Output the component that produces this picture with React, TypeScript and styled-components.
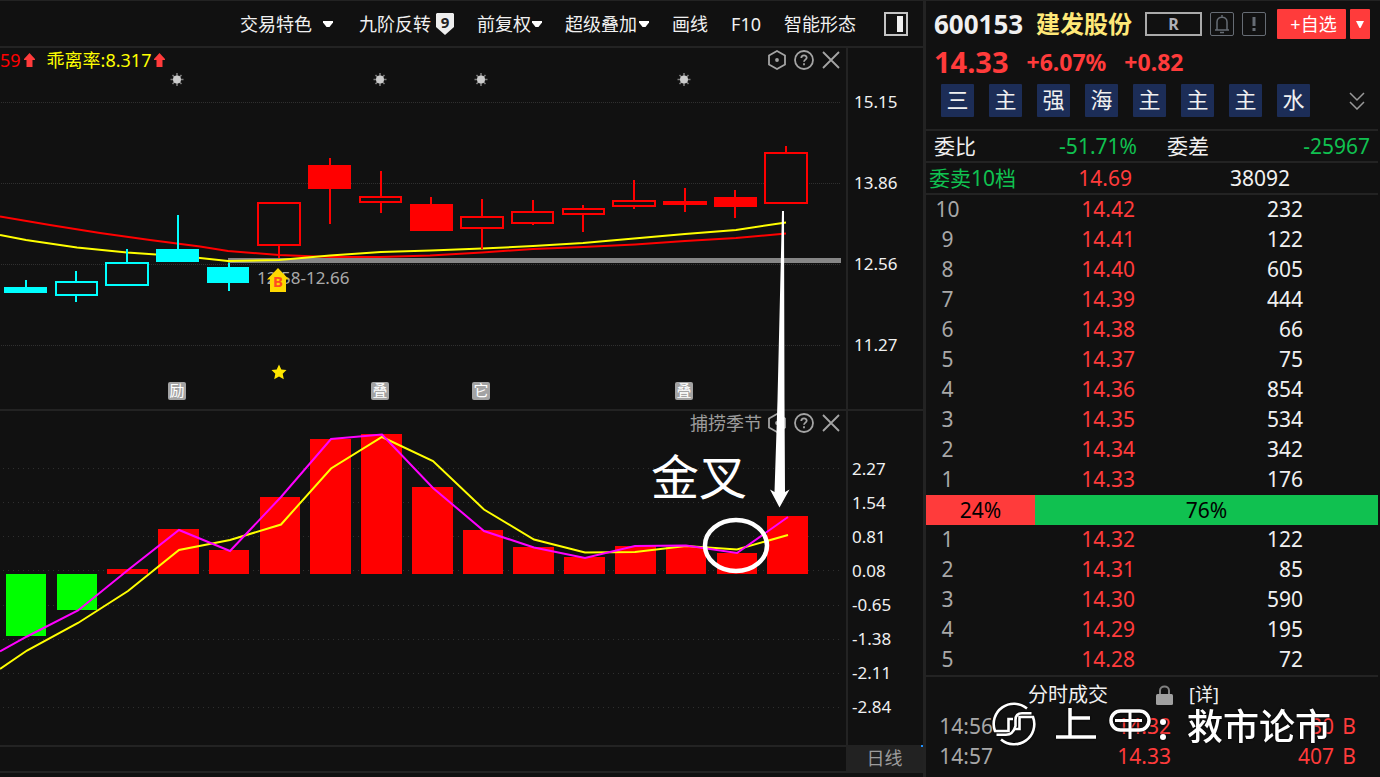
import React from "react";
import styled, { createGlobalStyle } from "styled-components";

const c = {
  bg: "#111111",
  line: "#232323",
  text: "#f0f0f0",
  muted: "#9c9c9c",
  red: "#ff3b3b",
  green: "#10c150",
  pureRed: "#ff0000",
  cyan: "#00ffff",
  yellow: "#ffff00",
  magenta: "#ff00ff",
};

const GlobalStyle = createGlobalStyle`
  * { box-sizing: border-box; }
  body {
    margin: 0;
    background: ${c.bg};
    color: ${c.text};
    font-family: "Noto Sans", "Noto Sans CJK SC", sans-serif;
    font-size: 18px;
  }
  button {
    font: inherit;
    color: inherit;
    background: none;
    border: 0;
    padding: 0;
    cursor: pointer;
  }
`;

/* ---------- page frame ---------- */

const Page = styled.div`
  display: flex;
  min-height: 100vh;
  border-top: 1px solid ${c.line};
  overflow: hidden;
`;

const Workspace = styled.main`
  flex: 1;
  min-width: 0;
  display: flex;
  flex-direction: column;
`;

const Sidebar = styled.aside`
  position: relative;
  flex: 0 0 457px;
  border-left: 3px solid ${c.line};
  padding-right: 2px;
`;

/* ---------- toolbar ---------- */

const Toolbar = styled.nav`
  display: flex;
  align-items: center;
  justify-content: flex-end;
  gap: 23px;
  height: 47px;
  padding-right: 15px;
  border-bottom: 2px solid ${c.line};
`;

const ToolButton = styled.button<{ $gap?: number; $after?: number }>`
  display: flex;
  align-items: center;
  gap: ${(p) => p.$gap ?? 2}px;
  margin-right: ${(p) => p.$after ?? 0}px;
  line-height: 26px;
  white-space: nowrap;
`;

const Caret = () => (
  <svg width="10" height="6" viewBox="0 0 10 6" aria-hidden="true">
    <path d="M0 0H10V1.5L6.5 6H3.5L0 1.5Z" fill="#fff" />
  </svg>
);

const ShieldSvg = styled.svg`
  overflow: visible;
`;

const Shield = () => (
  <ShieldSvg width="18" height="22" viewBox="0 0 18 22" aria-hidden="true">
    <path d="M1 0H17L18 1V14L9 22L0 14V1Z" fill="#eeeeee" />
    <text x="9" y="15" textAnchor="middle" fontSize="15" fontWeight="700" fill="#222">
      9
    </text>
  </ShieldSvg>
);

const PanelIcon = () => (
  <svg width="24" height="24" viewBox="0 0 24 24" aria-hidden="true">
    <rect x="1" y="1" width="22" height="22" fill="none" stroke="#c4c4c4" strokeWidth="2" />
    <rect x="13" y="4" width="6" height="16" fill="#f0f0f0" />
  </svg>
);

/* ---------- chart panes ---------- */

const ChartStack = styled.div`
  position: relative;
`;

const Pane = styled.section`
  display: flex;
  border-bottom: 2px solid ${c.line};
`;

const Plot = styled.div`
  position: relative;
  flex: 1;
  min-width: 0;
`;

const PlotSvg = styled.svg`
  display: block;
  width: 100%;
`;

const Axis = styled.div<{ $top: number; $step: number; $indent: number }>`
  flex: 0 0 77px;
  border-left: 2px solid ${c.line};
  padding: ${(p) => p.$top}px 0 0 ${(p) => p.$indent}px;
  font-size: 17px;
  line-height: ${(p) => p.$step}px;
`;

const PaneHead = styled.header`
  position: absolute;
  top: 0;
  left: 0;
  right: 0;
  display: flex;
  align-items: center;
  height: 24px;
  padding-right: 5px;
  line-height: 24px;
`;

const Legend = styled.span<{ $color: string }>`
  display: flex;
  align-items: center;
  gap: 3px;
  margin-right: 12px;
  color: ${(p) => p.$color};
`;

const PaneTools = styled.div`
  display: flex;
  align-items: center;
  gap: 7px;
  margin-left: auto;
  color: ${c.muted};
`;

const PaneTitle = styled.span`
  margin-right: -2px;
`;

const IconButton = styled.button`
  display: flex;
  color: #a4a4a4;
`;

const UpArrow = () => (
  <svg width="11" height="14" viewBox="0 0 11 14" aria-hidden="true">
    <path d="M5.500 0L11 6V7H8.500V14H2.500V7H0V6Z" fill={c.red} />
  </svg>
);

const Tools = ({ title }: { title?: string }) => (
  <PaneTools>
    {title && <PaneTitle>{title}</PaneTitle>}
    <IconButton aria-label="设置">
      <svg width="20" height="20" viewBox="0 0 20 20" fill="none" stroke="currentColor" strokeWidth="1.800">
        <path d="M10 1L18 5.500V14.500L10 19L2 14.500V5.500Z" />
        <circle cx="10" cy="10" r="1.900" fill="currentColor" stroke="none" />
      </svg>
    </IconButton>
    <IconButton aria-label="帮助">
      <svg width="20" height="20" viewBox="0 0 20 20" fill="none" stroke="currentColor" strokeWidth="1.800">
        <circle cx="10" cy="10" r="9" />
        <path d="M7.300 8C7.300 4.500 12.800 4.500 12.700 7.800C12.600 9.600 10 9.700 10 11.800" />
        <path d="M10 13.300V15.200" />
      </svg>
    </IconButton>
    <IconButton aria-label="关闭">
      <svg width="20" height="20" viewBox="0 0 20 20" fill="none" stroke="currentColor" strokeWidth="1.800">
        <path d="M2 2L18 18M18 2L2 18" />
      </svg>
    </IconButton>
  </PaneTools>
);

type Candle = {
  x: number;
  w: number;
  top: number;
  bottom: number;
  mid: number;
  high: number;
  low: number;
  color: string;
  solid?: boolean;
};

const candles: Candle[] = [
  { x: 4, w: 43, top: 287, bottom: 293, mid: 26, high: 280, low: 293, color: c.cyan, solid: true },
  { x: 55, w: 43, top: 281, bottom: 296, mid: 76, high: 271, low: 302, color: c.cyan },
  { x: 105, w: 44, top: 262, bottom: 286, mid: 127, high: 249, low: 286, color: c.cyan },
  { x: 156, w: 43, top: 249, bottom: 262, mid: 178, high: 215, low: 262, color: c.cyan, solid: true },
  { x: 207, w: 42, top: 267, bottom: 283, mid: 229, high: 263, low: 291, color: c.cyan, solid: true },
  { x: 257, w: 44, top: 202, bottom: 246, mid: 279, high: 202, low: 258, color: c.pureRed },
  { x: 308, w: 43, top: 165, bottom: 189, mid: 330, high: 158, low: 224, color: c.pureRed, solid: true },
  { x: 359, w: 43, top: 196, bottom: 203, mid: 381, high: 171, low: 213, color: c.pureRed },
  { x: 410, w: 43, top: 204, bottom: 231, mid: 431, high: 197, low: 231, color: c.pureRed, solid: true },
  { x: 460, w: 44, top: 216, bottom: 229, mid: 482, high: 199, low: 249, color: c.pureRed },
  { x: 511, w: 43, top: 211, bottom: 224, mid: 533, high: 200, low: 225, color: c.pureRed },
  { x: 562, w: 43, top: 208, bottom: 215, mid: 583, high: 205, low: 232, color: c.pureRed },
  { x: 612, w: 44, top: 200, bottom: 207, mid: 634, high: 180, low: 209, color: c.pureRed },
  { x: 663, w: 44, top: 201, bottom: 205, mid: 685, high: 188, low: 212, color: c.pureRed, solid: true },
  { x: 714, w: 43, top: 197, bottom: 207, mid: 735, high: 190, low: 218, color: c.pureRed, solid: true },
  { x: 764, w: 44, top: 152, bottom: 204, mid: 786, high: 146, low: 204, color: c.pureRed },
];

const maRed =
  "0,216.500 50,225 100,233 150,240 200,246.500 228,251 279,255 330,257 380,257 430,255.500 482,252.500 533,249 583,247 635,244.500 685,241 736,238 786,233.500";
const maYellow =
  "0,235 26,240 77,247.500 127,252.500 178,256 200,258 228,261 279,260 330,255.500 381,252 431,250.500 482,248.500 533,246 583,243 634,238.500 685,234 736,230 786,222.500";

const events = [
  { x: 177, label: "励" },
  { x: 380, label: "叠" },
  { x: 481, label: "它" },
  { x: 684, label: "叠" },
];

const priceTicks = ["15.15", "13.86", "12.56", "11.27"];

const PriceChart = () => (
  <PlotSvg height="361" viewBox="0 48 846 361" preserveAspectRatio="xMaxYMin meet">
    {[102, 183, 264, 345].map((y) => (
      <line key={y} x1="1" x2="841" y1={y + 0.5} y2={y + 0.5} stroke="#303030" strokeDasharray="1 1" />
    ))}
    <rect x="228" y="258" width="613" height="5" fill="#868686" />
    <polyline points={maRed} fill="none" stroke={c.pureRed} strokeWidth="2" />
    <polyline points={maYellow} fill="none" stroke={c.yellow} strokeWidth="2" />
    {candles.map((k) => (
      <g key={k.x} stroke={k.color} strokeWidth="2">
        <line x1={k.mid} x2={k.mid} y1={k.high} y2={k.low} />
        <rect
          x={k.x + 1}
          y={k.top + 1}
          width={k.w - 2}
          height={k.bottom - k.top - 2}
          fill={k.solid ? k.color : c.bg}
        />
      </g>
    ))}
    {events.map((e) => (
      <g key={e.x}>
        <g stroke="#7c7c7c" strokeWidth="1.600">
          <path d={`M${e.x} 73V86M${e.x - 6.5} 79.500H${e.x + 6.5}M${e.x - 4.5} 75L${e.x + 4.5} 84M${e.x + 4.5} 75L${e.x - 4.5} 84`} />
          <circle cx={e.x} cy="79.500" r="4" fill="#cccccc" stroke="none" />
        </g>
        <rect x={e.x - 9} y="382" width="18" height="18" rx="2" fill="#a3a3a3" />
        <text x={e.x} y="396" textAnchor="middle" fontSize="15" fill="#fff">
          {e.label}
        </text>
      </g>
    ))}
    <text x="257" y="284" fontSize="17" fill="#aaaaaa">
      12.58-12.66
    </text>
    <path d="M278 268L289 279.500H286V292H270V279.500H267Z" fill="#ffd800" />
    <text x="278" y="287" textAnchor="middle" fontSize="15" fontWeight="700" fill="#ff4a22">
      B
    </text>
    <path
      d="M279 364.500L281.300 369.500L286.500 370L282.700 373.800L283.800 379.300L279 376.500L274.200 379.300L275.300 373.800L271.500 370L276.700 369.500Z"
      fill="#ffe600"
    />
  </PlotSvg>
);

const zero = 574;
const bars = [
  { x: 6, w: 40, y: 636 },
  { x: 57, w: 40, y: 610 },
  { x: 107, w: 41, y: 569 },
  { x: 158, w: 41, y: 529 },
  { x: 209, w: 40, y: 550 },
  { x: 260, w: 40, y: 497 },
  { x: 310, w: 41, y: 439 },
  { x: 361, w: 41, y: 434 },
  { x: 412, w: 41, y: 487 },
  { x: 463, w: 40, y: 530 },
  { x: 513, w: 41, y: 547 },
  { x: 564, w: 41, y: 557 },
  { x: 615, w: 41, y: 546 },
  { x: 666, w: 40, y: 547 },
  { x: 717, w: 40, y: 553 },
  { x: 767, w: 41, y: 516 },
];
const fastLine =
  "0,651.500 27,636.500 78,610.500 128,570 179,530 230,551 281,497 331,439 382,434.500 433,488 484,531 534,547.500 585,558 635,546 686,545.500 737,553 788,517";
const slowLine =
  "0,669 27,650.500 78,623 128,591 179,550 230,540 281,524.500 331,468.500 382,437 433,461 484,509.500 534,539.500 585,552.500 635,552 686,546 737,549.500 788,535";

const indicatorTicks = ["2.27", "1.54", "0.81", "0.08", "-0.65", "-1.38", "-2.11", "-2.84"];

const IndicatorChart = () => (
  <PlotSvg height="334" viewBox="0 411 846 334" preserveAspectRatio="xMaxYMin meet">
    {[468, 502, 536, 570, 605, 639, 673, 707].map((y) => (
      <line key={y} x1="3" x2="841" y1={y + 0.5} y2={y + 0.5} stroke="#303030" strokeDasharray="1 4" />
    ))}
    {bars.map((b) => (
      <rect
        key={b.x}
        x={b.x}
        y={Math.min(b.y, zero)}
        width={b.w}
        height={Math.abs(b.y - zero)}
        fill={b.y > zero ? "#00ff00" : c.pureRed}
      />
    ))}
    <polyline points={slowLine} fill="none" stroke={c.yellow} strokeWidth="2" />
    <polyline points={fastLine} fill="none" stroke={c.magenta} strokeWidth="2" />
  </PlotSvg>
);

const Annotation = styled.svg`
  position: absolute;
  top: 0;
  left: 0;
  width: calc(100% - 77px);
  pointer-events: none;
`;

const CrossNote = () => (
  <Annotation height="697" viewBox="0 48 846 697" preserveAspectRatio="xMaxYMin meet">
    <path d="M782 211H784L784.500 400L785 492L789.500 489.500L779.500 507.500L770 489.500L774.500 492L777.500 400Z" fill="#fff" />
    <ellipse cx="736" cy="545.500" rx="31" ry="25.500" fill="none" stroke="#fff" strokeWidth="4.500" />
    <text x="651" y="495" fontSize="48" fill="#fff">
      金叉
    </text>
  </Annotation>
);

const Footer = styled.footer`
  display: flex;
  height: 26px;
  border-bottom: 2px solid ${c.line};
`;

const PeriodTab = styled.button`
  position: relative;
  width: 77px;
  margin-left: auto;
  margin-top: -2px;
  height: 26px;
  background: #222222;
  color: ${c.muted};
  line-height: 26px;
  &::after {
    content: "";
    position: absolute;
    top: 0;
    right: 0;
    width: 2px;
    height: 2px;
    background: #1e90ff;
  }
`;

/* ---------- quote sidebar ---------- */

const QuoteHead = styled.header`
  padding: 8px 8px 12px;
  border-bottom: 2px solid ${c.line};
`;

const TitleRow = styled.div`
  display: flex;
  align-items: center;
  height: 30px;
`;

const Code = styled.span`
  width: 102px;
  font-size: 26px;
  font-weight: 700;
  line-height: 30px;
`;

const StockName = styled.h1`
  margin: 0 13px 0 0;
  font-size: 24px;
  font-weight: 700;
  line-height: 30px;
  color: #ffe878;
  white-space: nowrap;
`;

const RBox = styled.button`
  width: 57px;
  height: 24px;
  margin-right: 8px;
  border: 2px solid #aaaaaa;
  color: #b0b0b8;
  font-size: 16px;
  font-weight: 700;
  line-height: 20px;
`;

const SquareButton = styled.button`
  display: flex;
  align-items: center;
  justify-content: center;
  width: 24px;
  height: 24px;
  margin-right: 8px;
  border: 1px solid #666c74;
  border-radius: 2px;
  color: #666c74;
`;

const AddButton = styled.button`
  width: 69px;
  height: 30px;
  margin-left: 3px;
  padding-left: 4px;
  background: ${c.red};
  border-radius: 1px;
  color: #fff;
  line-height: 30px;
  white-space: nowrap;
`;

const AddMenuButton = styled(AddButton)`
  display: flex;
  align-items: center;
  justify-content: center;
  width: 20px;
  margin-left: 4px;
  padding: 0;
`;

const PriceRow = styled.div`
  display: flex;
  align-items: center;
  gap: 18px;
  margin-top: 8px;
  height: 30px;
  line-height: 28px;
  color: ${c.red};
  font-weight: 700;
  font-size: 23px;
`;

const LastPrice = styled.strong`
  font-size: 29px;
  font-weight: 700;
`;

const TagRow = styled.div`
  display: flex;
  align-items: center;
  gap: 15px;
  margin-top: 7px;
  padding: 0 5px 0 7px;
`;

const Tag = styled.button`
  width: 33px;
  height: 33px;
  padding-bottom: 2px;
  background: #1c2d57;
  border-radius: 1px;
  font-size: 22px;
  line-height: 31px;
`;

const MoreButton = styled.button`
  display: flex;
  margin-left: auto;
`;

const RatioRow = styled.div`
  display: grid;
  grid-template-columns: 1fr 1fr;
  gap: 30px;
  height: 32px;
  padding: 0 8px 0 8px;
  border-bottom: 2px solid ${c.line};
  font-size: 21px;
  line-height: 30px;
`;

const Pair = styled.div`
  display: flex;
  justify-content: space-between;
`;

const Down = styled.span`
  color: ${c.green};
`;

const Up = styled.span`
  color: ${c.red};
`;

const SellTotal = styled.div`
  display: grid;
  grid-template-columns: 100px 103px 158px;
  height: 32px;
  padding-left: 3px;
  border-bottom: 2px solid ${c.line};
  font-size: 21px;
  line-height: 30px;
  & > :not(:first-child) {
    text-align: right;
  }
`;

const Book = styled.table`
  width: 100%;
  table-layout: fixed;
  border-collapse: collapse;
  font-size: 21px;
  line-height: 28px;
  th,
  td {
    height: 30px;
    padding: 0;
    text-align: right;
    vertical-align: top;
    font-weight: 400;
  }
  th {
    width: 43px;
    text-align: center;
    color: #a8a8a8;
  }
  td:nth-child(2) {
    width: 166px;
    color: ${c.red};
  }
  td:nth-child(3) {
    padding-right: 75px;
  }
`;

const ShareBar = styled.div`
  display: flex;
  height: 30px;
  color: #000;
  font-size: 21px;
  line-height: 30px;
  text-align: center;
`;

const SellShare = styled.div`
  width: 24.145%;
  background: ${c.red};
`;

const BuyShare = styled.div`
  flex: 1;
  background: ${c.green};
`;

const TradesHead = styled.div`
  display: flex;
  align-items: center;
  height: 37px;
  padding-left: 102px;
  border-top: 2px solid ${c.line};
  line-height: 35px;
`;

const TradesTitle = styled.h2`
  margin: 0 48px 0 0;
  font-size: 20px;
  font-weight: 400;
`;

const DetailLink = styled.a`
  margin-left: 16px;
  color: inherit;
  text-decoration: none;
`;

const Trades = styled(Book)`
  th {
    width: 67px;
    text-align: right;
  }
  td:nth-child(2) {
    width: 178px;
  }
  td:nth-child(3) {
    padding: 0;
    color: ${c.red};
  }
  td:nth-child(4) {
    width: 44px;
    padding-right: 22px;
    color: ${c.red};
  }
`;

const Watermark = styled.div`
  position: absolute;
  left: 66px;
  top: 701px;
  display: flex;
  align-items: center;
  height: 44px;
  color: #fff;
  font-size: 36px;
  font-weight: 500;
  line-height: 48px;
  white-space: nowrap;
  filter: drop-shadow(0 0 1px #000);
  pointer-events: none;
`;

const WatermarkName = styled.span`
  padding: 6px 0 0 17px;
`;

const sells = [
  [10, "14.42", 232],
  [9, "14.41", 122],
  [8, "14.40", 605],
  [7, "14.39", 444],
  [6, "14.38", 66],
  [5, "14.37", 75],
  [4, "14.36", 854],
  [3, "14.35", 534],
  [2, "14.34", 342],
  [1, "14.33", 176],
];

const buys = [
  [1, "14.32", 122],
  [2, "14.31", 85],
  [3, "14.30", 590],
  [4, "14.29", 195],
  [5, "14.28", 72],
];

const trades = [
  ["14:56", "14.32", "30", "B"],
  ["14:57", "14.33", "407", "B"],
];

const Levels = ({ rows }: { rows: (string | number)[][] }) => (
  <Book>
    <tbody>
      {rows.map(([level, price, volume]) => (
        <tr key={level}>
          <th scope="row">{level}</th>
          <td>{price}</td>
          <td>{volume}</td>
        </tr>
      ))}
    </tbody>
  </Book>
);

const BrandMark = () => (
  <svg width="44" height="44" viewBox="-22 -22 44 44" fill="none" stroke="#fff" strokeWidth="2.600" aria-hidden="true">
    <path d="M13 -15.500A20.200 20.200 0 0 0 -19 7H-5.500V-5H-1" />
    <path d="M-13 15.500A20.200 20.200 0 0 0 19 -7H5.500V5H1" />
    <path d="M17.500 -10.800H8Q1.500 -10.800 1.500 -4V2Q-1 10.800 -8 10.800H-17.500" />
  </svg>
);

const BrandWord = () => (
  <svg width="114" height="44" viewBox="0 0 114 44" fill="none" stroke="#fff" strokeWidth="3.500" aria-hidden="true">
    <path d="M14 6V34M14 16H34M0 35H40" />
    <rect x="55" y="9" width="38" height="19" rx="9.500" />
    <path d="M74 10V37M59 18.500H86" strokeWidth="3" />
    <circle cx="107" cy="20" r="3" fill="#fff" stroke="none" />
    <circle cx="107" cy="35" r="3" fill="#fff" stroke="none" />
  </svg>
);

const BrandGap = styled.span`
  width: 20px;
`;

export default function App() {
  return (
    <>
      <GlobalStyle />
      <Page>
        <Workspace>
          <Toolbar>
            <ToolButton $gap={11} $after={3}>
              交易特色
              <Caret />
            </ToolButton>
            <ToolButton $gap={5}>
              九阶反转
              <Shield />
            </ToolButton>
            <ToolButton $gap={1}>
              前复权
              <Caret />
            </ToolButton>
            <ToolButton>
              超级叠加
              <Caret />
            </ToolButton>
            <ToolButton>画线</ToolButton>
            <ToolButton>F10</ToolButton>
            <ToolButton $after={5}>智能形态</ToolButton>
            <ToolButton aria-label="侧栏">
              <PanelIcon />
            </ToolButton>
          </Toolbar>

          <ChartStack>
            <Pane>
              <Plot>
                <PriceChart />
                <PaneHead>
                  <Legend $color={c.pureRed}>
                    59
                    <UpArrow />
                  </Legend>
                  <Legend $color={c.yellow}>
                    乖离率:8.317
                    <UpArrow />
                  </Legend>
                  <Tools />
                </PaneHead>
              </Plot>
              <Axis $top={13} $step={81} $indent={6}>
                {priceTicks.map((t) => (
                  <div key={t}>{t}</div>
                ))}
              </Axis>
            </Pane>
            <Pane>
              <Plot>
                <IndicatorChart />
                <PaneHead>
                  <Tools title="捕捞季节" />
                </PaneHead>
              </Plot>
              <Axis $top={41} $step={34} $indent={4}>
                {indicatorTicks.map((t) => (
                  <div key={t}>{t}</div>
                ))}
              </Axis>
            </Pane>
            <CrossNote />
          </ChartStack>

          <Footer>
            <PeriodTab>日线</PeriodTab>
          </Footer>
        </Workspace>

        <Sidebar>
          <QuoteHead>
            <TitleRow>
              <Code>600153</Code>
              <StockName>建发股份</StockName>
              <RBox>R</RBox>
              <SquareButton aria-label="提醒">
                <svg width="16" height="20" viewBox="0 0 16 20" fill="none" stroke="currentColor" strokeWidth="1.500">
                  <path d="M1 16H15M3 16V8C3 1.500 13 1.500 13 8V16M8 1V3M6 18.500H10" />
                </svg>
              </SquareButton>
              <SquareButton aria-label="公告">
                <svg width="4" height="14" viewBox="0 0 4 14" fill="currentColor">
                  <path d="M0.500 0H3.500V9H0.500ZM0.500 11H3.500V14H0.500Z" />
                </svg>
              </SquareButton>
              <AddButton>+自选</AddButton>
              <AddMenuButton aria-label="自选菜单">
                <svg width="8" height="7" viewBox="0 0 8 7" aria-hidden="true">
                  <path d="M0 0H8L4.500 7H3.500Z" fill="#fff" />
                </svg>
              </AddMenuButton>
            </TitleRow>
            <PriceRow>
              <LastPrice>14.33</LastPrice>
              <span>+6.07%</span>
              <span>+0.82</span>
            </PriceRow>
            <TagRow>
              {["三", "主", "强", "海", "主", "主", "主", "水"].map((t, i) => (
                <Tag key={i}>{t}</Tag>
              ))}
              <MoreButton aria-label="更多">
                <svg width="16" height="18" viewBox="0 0 16 18" fill="none" stroke="#999" strokeWidth="1.500">
                  <path d="M1 1L8 8L15 1M1 10L8 17L15 10" />
                </svg>
              </MoreButton>
            </TagRow>
          </QuoteHead>

          <RatioRow>
            <Pair>
              <span>委比</span>
              <Down>-51.71%</Down>
            </Pair>
            <Pair>
              <span>委差</span>
              <Down>-25967</Down>
            </Pair>
          </RatioRow>
          <SellTotal>
            <Down>委卖10档</Down>
            <Up>14.69</Up>
            <span>38092</span>
          </SellTotal>

          <Levels rows={sells} />
          <ShareBar>
            <SellShare>24%</SellShare>
            <BuyShare>76%</BuyShare>
          </ShareBar>
          <Levels rows={buys} />

          <TradesHead>
            <TradesTitle>分时成交</TradesTitle>
            <svg width="17" height="20" viewBox="0 0 17 20" aria-hidden="true">
              <path d="M4 10V5.500C4 0 13 0 13 5.500V10" fill="none" stroke="#808080" strokeWidth="2" />
              <rect y="9" width="17" height="11" rx="1.500" fill="#a0a0a0" />
            </svg>
            <DetailLink href="#detail">[详]</DetailLink>
          </TradesHead>
          <Trades>
            <tbody>
              {trades.map(([time, price, volume, side]) => (
                <tr key={time}>
                  <th scope="row">{time}</th>
                  <td>{price}</td>
                  <td>{volume}</td>
                  <td>{side}</td>
                </tr>
              ))}
            </tbody>
          </Trades>

          <Watermark>
            <BrandMark />
            <BrandGap />
            <BrandWord />
            <WatermarkName>救市论市</WatermarkName>
          </Watermark>
        </Sidebar>
      </Page>
    </>
  );
}
